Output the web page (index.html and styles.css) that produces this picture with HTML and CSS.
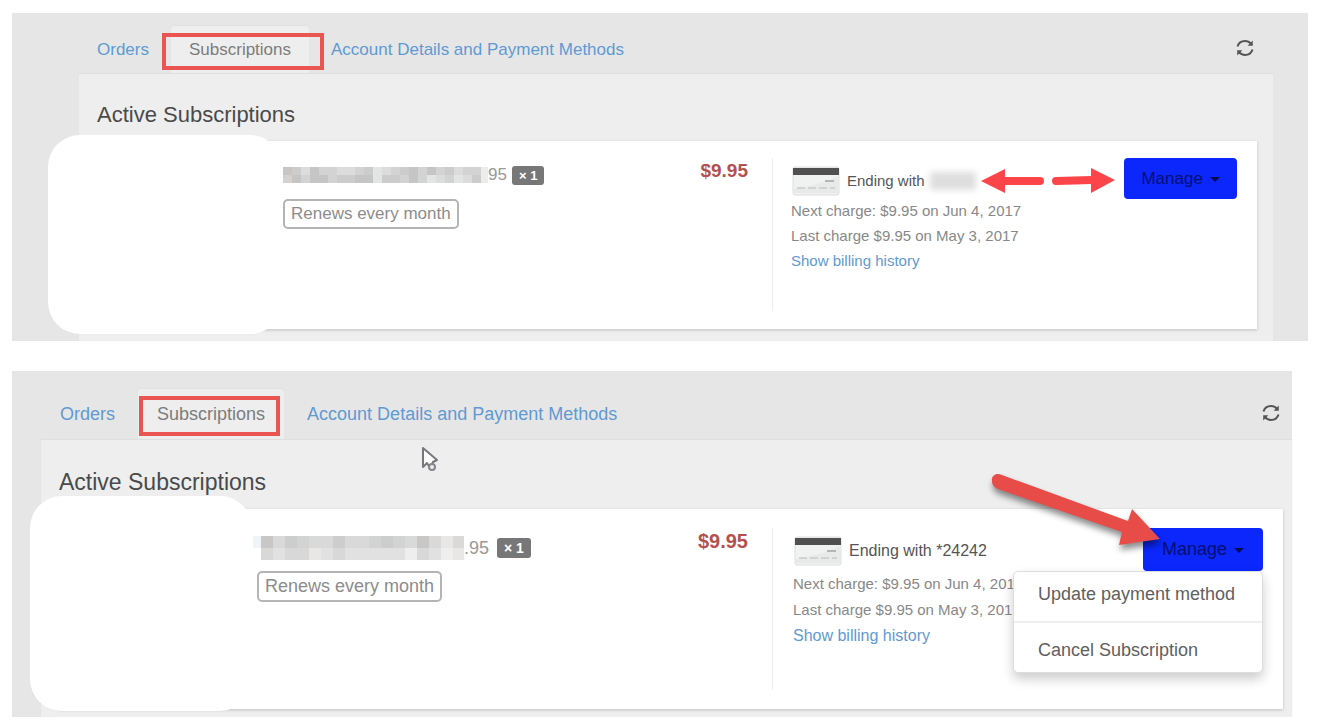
FILE: index.html
```
<!DOCTYPE html>
<html lang="en">
<head>
  <meta charset="UTF-8">
  <title>Subscriptions</title>
  <link rel="stylesheet" href="styles.css">
</head>
<body>

<section class="panel">
  <div class="top-bar">
    <nav class="tabs">
      <a class="tab" href="#orders">Orders</a>
      <a class="tab active" href="#subscriptions">Subscriptions<span class="highlight"></span></a>
      <a class="tab" href="#account">Account Details and Payment Methods</a>
    </nav>
    <button class="refresh" type="button" aria-label="Refresh">
      <svg width="18" height="18" viewBox="0 0 18 18" fill="none" stroke="#555" stroke-width="2">
        <path d="M1.5 7.5C2.5 4 5.5 2 9 2c2.500 0 4.500 1 6 2.800"/>
        <path d="M16.500 10.500C15.500 14 12.500 16 9 16c-2.500 0-4.500-1-6-2.800"/>
        <path d="M16.800 1.500v5.200h-5.200zM1.200 16.500v-5.200h5.200z" fill="#555" stroke="none"/>
      </svg>
    </button>
  </div>

  <div class="content">
    <h2>Active Subscriptions</h2>
    <div class="card">
      <div class="product">
        <div>
          <div class="product-name">
            <svg class="hidden-name" width="205" height="16" viewBox="0 0 205 16" shape-rendering="crispEdges">
              <path fill="#d3d3d3" d="M0 0h205v16H0z"/>
              <path fill="#c9c5c3" d="M0 0h9v8H0z"/>
              <path fill="#d6d0ce" d="M0 8h9v8H0z"/>
              <path fill="#c5c5c5" d="M9 8h9v8H9zM27 0h9v8h-9zM27 8h18v8H27zM72 8h18v8H72zM126 0h9v8h-9zM126 8h9v8h-9zM144 0h9v8h-9z"/>
              <path fill="#cccccc" d="M9 0h9v8H9zM54 8h18v8H54zM81 0h9v8h-9zM99 8h18v8H99zM117 0h9v8h-9zM162 0h9v8h-9zM189 8h9v8h-9z"/>
              <path fill="#dcdcdc" d="M18 0h9v8h-9zM54 0h18v8H54zM99 0h9v8h-9zM153 8h9v8h-9zM171 0h9v8h-9zM180 8h9v8h-9z"/>
              <path fill="#e3e5e5" d="M90 0h9v8h-9zM90 8h9v8h-9zM144 8h9v8h-9zM171 8h9v8h-9z"/>
              <path fill="#ececec" d="M198 0h7v16h-7z"/>
            </svg>
            <span>95</span>
            <span class="badge">× 1</span>
          </div>
          <span class="renew">Renews every month</span>
        </div>
        <strong class="price">$9.95</strong>
      </div>
      <div class="billing">
        <div>
          <div class="method">
            <svg class="credit-card" viewBox="0 0 48 30">
              <rect x="1" y="1" width="46" height="28" rx="2" fill="#f0f1f1" stroke="#dedede"/>
              <path d="M1 2h46v7H1z" fill="#505050"/>
              <path d="M1 23c16-2 32-7 46-13v17H1z" fill="#e8e9e9"/>
              <path d="M33 15h9" stroke="#b5b5b5" stroke-width="2"/>
              <path d="M5 22h38" stroke="#d2d2d2" stroke-width="2" stroke-dasharray="8 3"/>
            </svg>
            <span>Ending with</span>
            <span class="blurred"></span>
          </div>
          <p>Next charge: $9.95 on Jun 4, 2017</p>
          <p>Last charge $9.95 on May 3, 2017</p>
          <a href="#history">Show billing history</a>
        </div>
        <div class="manage">
          <button class="manage-btn" type="button">Manage <span class="caret"></span></button>
          <svg class="arrows" width="136" height="28" viewBox="0 0 136 28" fill="#fb4549" stroke="#fb4549">
            <path d="M1 14L25 2v24z" stroke="none"/>
            <path d="M24 14h36M76 14l36-1" stroke-width="8" stroke-linecap="round"/>
            <path d="M135 13L111 1v25z" stroke="none"/>
          </svg>
        </div>
      </div>
      <div class="cover"></div>
    </div>
  </div>
</section>

<section class="panel panel-large">
  <div class="top-bar">
    <nav class="tabs">
      <a class="tab" href="#orders">Orders</a>
      <a class="tab active" href="#subscriptions">Subscriptions<span class="highlight"></span></a>
      <a class="tab" href="#account">Account Details and Payment Methods</a>
    </nav>
    <button class="refresh" type="button" aria-label="Refresh">
      <svg width="18" height="18" viewBox="0 0 18 18" fill="none" stroke="#555" stroke-width="2">
        <path d="M1.5 7.5C2.5 4 5.5 2 9 2c2.500 0 4.500 1 6 2.800"/>
        <path d="M16.500 10.500C15.500 14 12.500 16 9 16c-2.500 0-4.500-1-6-2.800"/>
        <path d="M16.800 1.500v5.200h-5.200zM1.200 16.500v-5.200h5.200z" fill="#555" stroke="none"/>
      </svg>
    </button>
  </div>

  <div class="content">
    <svg class="cursor" width="18" height="28" viewBox="0 0 18 28">
      <path d="M2 2v19l4-4 3 5 3-6 4-2z" fill="#fff" stroke="#77777c" stroke-width="2" stroke-linejoin="round"/>
      <circle cx="11" cy="21" r="3" fill="#eee" stroke="#85858a" stroke-width="2"/>
    </svg>
    <h2>Active Subscriptions</h2>
    <div class="card">
      <div class="product">
        <div>
          <div class="product-name">
            <svg class="hidden-name" width="211" height="24" viewBox="0 0 211 24" shape-rendering="crispEdges">
              <path fill="#eff4f8" d="M0 0h8v12H0z"/>
              <path fill="#d9d9d9" d="M8 0h203v12H8z"/>
              <path fill="#e1e1e1" d="M8 12h203v12H8z"/>
              <path fill="#c9c7c6" d="M8 0h12v12H8zM164 0h12v12h-12z"/>
              <path fill="#cdcdcd" d="M32 0h12v12H32zM80 0h12v12H80zM128 0h12v12h-12z"/>
              <path fill="#d2d3d3" d="M44 0h12v12H44zM116 0h12v12h-12zM140 0h12v12h-12zM188 0h12v12h-12z"/>
              <path fill="#d9d8d8" d="M8 12h12v12H8zM32 12h24v12H32zM80 12h12v12H80zM164 12h12v12h-12z"/>
              <path fill="#e8e7e6" d="M56 12h12v12H56zM188 0h12v12h-12zM200 12h11v12h-11z"/>
              <path fill="#eeeeee" d="M152 12h12v12h-12zM188 12h12v12h-12z"/>
            </svg>
            <span>.95</span>
            <span class="badge">× 1</span>
          </div>
          <span class="renew">Renews every month</span>
        </div>
        <strong class="price">$9.95</strong>
      </div>
      <div class="billing">
        <div>
          <div class="method">
            <svg class="credit-card" viewBox="0 0 48 30">
              <rect x="1" y="1" width="46" height="28" rx="2" fill="#f0f1f1" stroke="#dedede"/>
              <path d="M1 2h46v7H1z" fill="#505050"/>
              <path d="M1 23c16-2 32-7 46-13v17H1z" fill="#e8e9e9"/>
              <path d="M33 15h9" stroke="#b5b5b5" stroke-width="2"/>
              <path d="M5 22h38" stroke="#d2d2d2" stroke-width="2" stroke-dasharray="8 3"/>
            </svg>
            <span>Ending with *24242</span>
          </div>
          <p>Next charge: $9.95 on Jun 4, 2017</p>
          <p>Last charge $9.95 on May 3, 2017</p>
          <a href="#history">Show billing history</a>
        </div>
        <div class="manage">
          <button class="manage-btn" type="button">Manage <span class="caret"></span></button>
          <ul class="menu">
            <li><a href="#update">Update payment method</a></li>
            <li><a href="#cancel">Cancel Subscription</a></li>
          </ul>
          <svg class="big-arrow" width="180" height="84" viewBox="0 0 180 84">
            <path d="M11 3C5 0 0 4 1 9c0 4 2 6 6 8l124 43-3 13 41-6-28-30-4 12z" fill="#e84c48"/>
          </svg>
        </div>
      </div>
      <div class="cover"></div>
    </div>
  </div>
</section>

</body>
</html>
```
FILE: styles.css
```
* {
  box-sizing: border-box;
}

body {
  font-family: "Liberation Sans", Arial, sans-serif;
  font-size: 17px;
  background-color: #fff;
  margin: 0;
  padding: 13px 32px 11px 12px;
}

a {
  color: #5f9ad3;
  text-decoration: none;
}

p {
  margin: 0;
}

button {
  font-family: inherit;
  font-size: inherit;
  border: none;
  padding: 0;
  cursor: pointer;
}

.panel {
  background-color: #e6e6e6;
  margin-right: -16px;
  margin-bottom: 30px;
  padding: 13px 35px 0 67px;
}

/* tabs */
.top-bar {
  display: flex;
  justify-content: space-between;
  align-items: center;
}

.tabs {
  display: flex;
  gap: 4px;
}

.tab {
  position: relative;
  height: 48px;
  line-height: 48px;
  padding: 0 18px;
}

.tab.active {
  color: #7c7c7c;
  background-color: #eee;
  border-radius: 4px 4px 0 0;
  box-shadow: 0 -1px 1px #e0e0e0;
}

.highlight {
  position: absolute;
  top: 7px;
  left: -9px;
  right: -15px;
  height: 37px;
  border: 4px solid #ea5451;
}

.refresh {
  background: none;
  width: 18px;
  height: 18px;
  margin-right: 19px;
  margin-bottom: 4px;
}

.refresh svg {
  display: block;
}

/* content */
.content {
  position: relative;
  background-color: #eee;
  box-shadow: 0 -1px 1px #dfdfdf;
  padding: 0 16px 12px 18px;
}

h2 {
  font-size: 22px;
  font-weight: normal;
  color: #4a4a4a;
  height: 67px;
  line-height: 26px;
  margin: 0;
  padding-top: 28px;
}

.card {
  position: relative;
  display: grid;
  grid-template-columns: 1fr 465px;
  background-color: #fff;
  box-shadow: 0 1px 3px rgba(0,0,0,0.2);
  padding: 17px 20px 18px 186px;
}

.cover {
  position: absolute;
  top: -6px;
  bottom: -5px;
  left: -49px;
  width: 234px;
  background-color: #fff;
  border-radius: 32px;
}

.product {
  display: flex;
  justify-content: space-between;
  align-items: flex-start;
  padding-right: 24px;
}

.product-name {
  display: flex;
  align-items: center;
  height: 24px;
  margin: 5px 0 12px;
  color: #999;
}

.badge {
  background-color: #777;
  color: #fff;
  font-size: 13px;
  font-weight: bold;
  line-height: 19px;
  padding: 0 7px;
  margin-left: 5px;
  border-radius: 3px;
}

.renew {
  display: inline-block;
  border: 2px solid #b4b4b4;
  border-radius: 5px;
  color: #8c8c8c;
  line-height: 26px;
  padding: 0 6px;
}

.price {
  color: #b4514f;
  font-size: 19px;
  line-height: 26px;
}

/* billing */
.billing {
  display: flex;
  justify-content: space-between;
  align-items: flex-start;
  min-height: 153px;
  border-left: 1px solid #eee;
  padding-left: 18px;
  font-size: 15px;
  line-height: 25px;
  color: #888;
}

.method {
  display: flex;
  align-items: center;
  height: 40px;
  padding-top: 5px;
  color: #555;
}

.credit-card {
  width: 48px;
  height: 30px;
  margin: 0 7px 0 1px;
}

.blurred {
  width: 46px;
  height: 18px;
  margin-left: 5px;
  background-color: #dedede;
  filter: blur(3px);
}

.manage {
  position: relative;
}

.manage-btn {
  background-color: #0b27fb;
  color: #070f75;
  font-size: 17px;
  width: 113px;
  height: 41px;
  border-radius: 4px;
}

.caret {
  display: inline-block;
  vertical-align: middle;
  margin-left: 2px;
  border-top: 5px solid #050a55;
  border-left: 5px solid transparent;
  border-right: 5px solid transparent;
}

.arrows {
  position: absolute;
  top: 9px;
  right: 121px;
}

.menu {
  position: absolute;
  top: 100%;
  right: 0;
  width: 250px;
  margin: 0;
  padding: 0;
  list-style: none;
  background-color: #fff;
  border: 1px solid #ddd;
  border-radius: 5px;
  box-shadow: 0 6px 12px rgba(0,0,0,0.2);
}

.menu li + li {
  border-top: 2px solid #eee;
  margin-top: 5px;
  padding-top: 5px;
}

.menu a {
  display: block;
  color: #606060;
  font-size: 18px;
  line-height: 44px;
  padding: 0 24px;
}

.big-arrow {
  position: absolute;
  top: -56px;
  right: 92px;
  filter: drop-shadow(1px 5px 3px rgba(0,0,0,0.45));
}

.cursor {
  position: absolute;
  top: 6px;
  left: 380px;
}

/* the second panel is shown a little bigger */
.panel-large {
  font-size: 18px;
  margin: 0;
  padding: 18px 0 0 29px;
}

.panel-large .tab {
  height: 51px;
  line-height: 51px;
  padding: 0 19px;
}

.panel-large .highlight {
  left: 1px;
  right: 4px;
  height: 40px;
}

.panel-large .refresh {
  margin-right: 12px;
}

.panel-large .content {
  padding: 0 9px 8px 18px;
}

.panel-large h2 {
  font-size: 23px;
  height: 69px;
  padding-top: 29px;
}

.panel-large .card {
  grid-template-columns: 1fr 491px;
  padding: 19px 20px 19px 198px;
}

.panel-large .cover {
  top: -13px;
  bottom: -2px;
  left: -29px;
  width: 222px;
}

.panel-large .hidden-name {
  margin-left: -4px;
}

.panel-large .product-name {
  margin: 8px 0 11px;
}

.panel-large .badge {
  font-size: 14px;
  line-height: 20px;
  margin-left: 8px;
}

.panel-large .renew {
  line-height: 27px;
}

.panel-large .price {
  font-size: 20px;
}

.panel-large .billing {
  min-height: 162px;
  padding-left: 20px;
  line-height: 26px;
}

.panel-large .method {
  height: 43px;
  padding-top: 3px;
}

.panel-large .method,
.panel-large .billing > div > a {
  font-size: 16px;
}

.panel-large .manage-btn {
  font-size: 18px;
  width: 120px;
  height: 43px;
}
```
